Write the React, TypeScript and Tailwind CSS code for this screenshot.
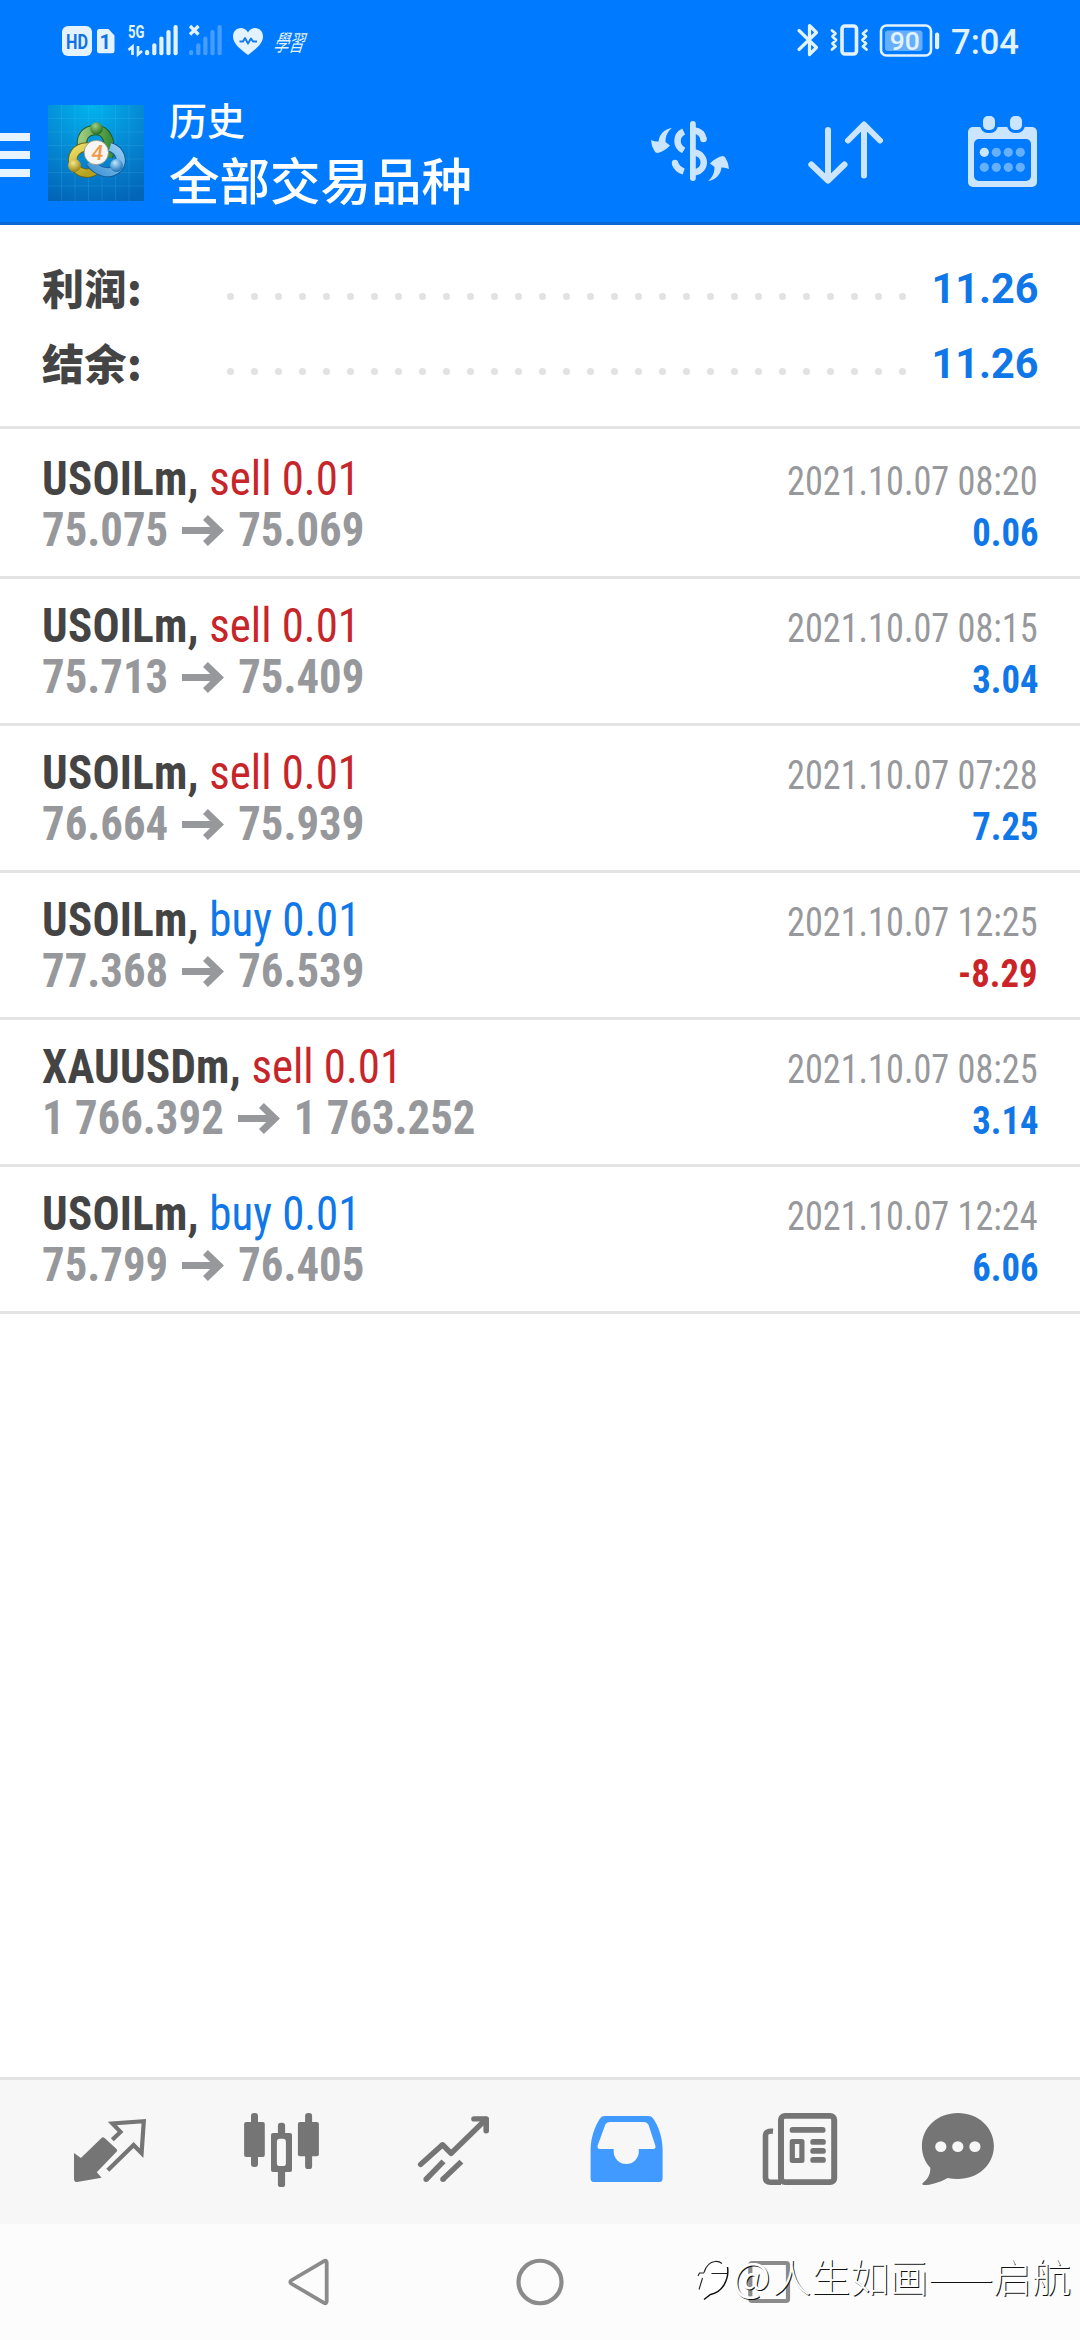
import type { ReactNode } from "react";

const CJK = "font-['Noto_Sans_CJK_SC',sans-serif]";
const ROBOTO = "font-[Roboto,sans-serif]";
const CONDENSED = "font-['Roboto_Condensed',Roboto,sans-serif] [font-stretch:75%]";

type Slice = { x: number; y: number; w: number; h: number; outH?: number; className?: string; children: ReactNode };

/* An icon drawn in screen coordinates: the view box is the icon's own area. */
function Icon({ x, y, w, h, outH, className = "", children }: Slice) {
  return (
    <svg
      width={w}
      height={outH ?? h}
      viewBox={`${x} ${y} ${w} ${h}`}
      preserveAspectRatio="none"
      fill="none"
      className={`block shrink-0 overflow-visible ${className}`}
    >
      {children}
    </svg>
  );
}

function SignalBars({ x }: { x: number }) {
  return (
    <g fill="currentColor">
      <rect x={x} y="50" width="4.2" height="5.2" rx="2" />
      <rect x={x + 7.2} y="43.3" width="4.2" height="12" rx="2" />
      <rect x={x + 14.3} y="36.6" width="4.2" height="18.6" rx="2" />
      <rect x={x + 21.4} y="30" width="4.2" height="25.2" rx="2" />
      <rect x={x + 28.5} y="25" width="4.2" height="30.2" rx="2" />
    </g>
  );
}

function StatusBar() {
  return (
    <div className="flex h-20 items-start justify-between pr-[50px] pl-[60px] text-[#e3f2ff]">
      <div className="flex">
        <Icon x={60} y={0} w={34} h={80}>
          <rect x="62" y="26" width="30" height="30" rx="6" fill="currentColor" />
          <text x="77" y="48.800" textAnchor="middle" fontSize="19.5" fontWeight="700" textLength="22" lengthAdjust="spacingAndGlyphs" fill="#1273e0" className="font-[Roboto,sans-serif]">
            HD
          </text>
        </Icon>
        <Icon x={94} y={0} w={32} h={80}>
          <path d="M99 29h9.5l6 6.5V51a2.2 2.2 0 0 1-2.2 2.2H99A2.2 2.2 0 0 1 97 51V31.200A2.200 2.200 0 0 1 99 29Z" fill="currentColor" />
          <text x="105.300" y="49" textAnchor="middle" fontSize="20" fontWeight="700" fill="#1273e0" className="font-[Roboto,sans-serif]">
            1
          </text>
        </Icon>
        <Icon x={126} y={0} w={60} h={80}>
          <text x="128" y="38" fontSize="18" fontWeight="700" textLength="16.500" lengthAdjust="spacingAndGlyphs" fill="currentColor" className="font-[Roboto,sans-serif]">
            5G
          </text>
          <path d="M128.500 50l4-3.500V55M138 46v8.500l4-3.500" stroke="currentColor" strokeWidth="2.600" />
          <SignalBars x={145} />
        </Icon>
        <Icon x={186} y={0} w={44} h={80}>
          <path d="M190 26l8.500 8.500M198.500 26l-8.500 8.500" stroke="currentColor" strokeWidth="3.200" />
          <g opacity="0.3">
            <SignalBars x={189} />
          </g>
        </Icon>
        <Icon x={230} y={0} w={40} h={80}>
          <path d="M248 55C240 49 233 43.500 233 36.500C233 31.500 236.500 28 240.800 28C243.800 28 246.600 29.700 248 32.500C249.400 29.700 252.200 28 255.200 28C259.500 28 263 31.500 263 36.500C263 43.500 256 49 248 55Z" fill="currentColor" />
          <path d="M239.500 41.500h3.500l2-3.500 3 5.500 3-5 2 3h4" stroke="#1a7cea" strokeWidth="2" strokeLinejoin="round" />
        </Icon>
        <Icon x={270} y={0} w={44} h={80}>
          <g transform="translate(273 50.500) skewX(-18) scale(.72 1.080)">
            <text fontSize="21" fontWeight="400" fill="currentColor" className="font-['Noto_Sans_CJK_TC',sans-serif]">
              學習
            </text>
          </g>
        </Icon>
      </div>
      <div className="flex">
        <Icon x={795} y={0} w={30} h={80}>
          <path d="M799 30.500L816.500 47.500L809.500 54.500V25.500L816.500 32.500L799 49.500" stroke="currentColor" strokeWidth="3.200" strokeLinejoin="round" strokeLinecap="round" />
        </Icon>
        <Icon x={825} y={0} w={50} h={80}>
          <rect x="842" y="26" width="14.500" height="28" rx="3" stroke="currentColor" strokeWidth="3.600" />
          <path d="M832 30.500l3.500 3-3 3 3.500 3.500-3.500 3.500 3 3-3.500 3M866.500 30.500l-3.500 3 3 3-3.500 3.500 3.500 3.500-3 3 3.500 3" stroke="currentColor" strokeWidth="2.800" strokeLinejoin="round" strokeLinecap="round" />
        </Icon>
        <Icon x={875} y={0} w={75} h={80}>
          <rect x="881" y="25.500" width="50" height="30" rx="5.500" stroke="currentColor" strokeWidth="2.600" />
          <rect x="885" y="30.500" width="37.500" height="20.500" rx="3" fill="#66afff" />
          <text x="904.800" y="50" textAnchor="middle" fontSize="26.500" fontWeight="500" fill="currentColor" className="font-[Roboto,sans-serif]">
            90
          </text>
          <rect x="935" y="32.500" width="4.200" height="16.800" rx="2" fill="currentColor" />
        </Icon>
        <Icon x={950} y={0} w={80} h={80}>
          <text x="951" y="54.300" fontSize="35.500" fontWeight="500" textLength="68" lengthAdjust="spacingAndGlyphs" fill="currentColor" className="font-[Roboto,sans-serif]">
            7:04
          </text>
        </Icon>
      </div>
    </div>
  );
}

function AppLogo() {
  return (
    <Icon x={0} y={0} w={96} h={96}>
      <defs>
        <radialGradient id="logoBg" cx="0.45" cy="0" r="1.05">
          <stop offset="0" stopColor="#00b4ee" />
          <stop offset="0.5" stopColor="#058ad4" />
          <stop offset="1" stopColor="#0365b8" />
        </radialGradient>
        <radialGradient id="ballG" cx="0.4" cy="0.3" r="0.7">
          <stop offset="0" stopColor="#a3cf86" />
          <stop offset="1" stopColor="#226e22" />
        </radialGradient>
        <radialGradient id="ballY" cx="0.4" cy="0.3" r="0.7">
          <stop offset="0" stopColor="#f5e98a" />
          <stop offset="1" stopColor="#9c8210" />
        </radialGradient>
        <radialGradient id="ballB" cx="0.4" cy="0.3" r="0.7">
          <stop offset="0" stopColor="#bfe6ff" />
          <stop offset="1" stopColor="#1c70b8" />
        </radialGradient>
        <linearGradient id="lobeG" x1="0" y1="0" x2="1" y2="0">
          <stop offset="0" stopColor="#9cc97c" />
          <stop offset="1" stopColor="#3f8f3a" />
        </linearGradient>
        <linearGradient id="lobeY" x1="0" y1="0" x2="0.6" y2="1">
          <stop offset="0" stopColor="#ece06a" />
          <stop offset="1" stopColor="#b5a11c" />
        </linearGradient>
        <linearGradient id="lobeB" x1="0" y1="1" x2="1" y2="0">
          <stop offset="0" stopColor="#3f93d4" />
          <stop offset="1" stopColor="#93cdf2" />
        </linearGradient>
      </defs>
      <rect width="96" height="96" fill="url(#logoBg)" />
      <path d="M13.500 0v96M27 0v96M40.500 0v96M54 0v96M67.500 0v96M81 0v96M0 13.500h96M0 27h96M0 40.500h96M0 54h96M0 67.500h96M0 81h96" stroke="#5cc4f2" strokeOpacity="0.22" strokeWidth="0.800" />
      <path d="M35 46C31 32 38 25 48 25C58 25 64 36 60 52" stroke="#1f5a24" strokeWidth="10.500" />
      <path d="M35 46C31 32 38 25 48 25C58 25 64 36 60 52" stroke="url(#lobeG)" strokeWidth="8.500" />
      <path d="M41 42C28 41 21 52 27 62C33 70 44 70 50 63" stroke="#6b6414" strokeWidth="9.500" />
      <path d="M41 42C28 41 21 52 27 62C33 70 44 70 50 63" stroke="url(#lobeY)" strokeWidth="7.500" />
      <path d="M62 42C72 45 76 56 70 63C62 71 49 67 42 57" stroke="#175a98" strokeWidth="10" />
      <path d="M62 42C72 45 76 56 70 63C62 71 49 67 42 57" stroke="url(#lobeB)" strokeWidth="8" />
      <circle cx="48.500" cy="23.500" r="6.300" fill="url(#ballG)" />
      <circle cx="26.500" cy="60.500" r="6.500" fill="url(#ballY)" />
      <circle cx="68.500" cy="60.500" r="6.500" fill="url(#ballB)" />
      <circle cx="48.300" cy="47.500" r="12.200" fill="#f6f6f4" stroke="#8a8f70" strokeWidth="0.800" />
      <g transform="translate(48.500 55) skewX(-8)">
        <text textAnchor="middle" fontSize="21" fontWeight="500" fill="#f09a4a" className="font-[Roboto,sans-serif]">
          4
        </text>
      </g>
    </Icon>
  );
}

function Header() {
  return (
    <header className="h-[225px] border-b-[3px] border-[#0968d2] bg-[#007aff]">
      <StatusBar />
      <div className="flex items-start">
        <div className="mt-[53px] flex w-[30px] flex-col gap-2.5">
          <span className="h-2 bg-[#e6f4ff]" />
          <span className="h-2 bg-[#e6f4ff]" />
          <span className="h-2 bg-[#e6f4ff]" />
        </div>
        <div className="mt-[25px] ml-[18px]">
          <AppLogo />
        </div>
        <div className={`ml-[25px] w-[471px] ${CJK} font-medium text-white`}>
          <div className="mt-[13px] h-[52px] text-[38px] leading-[52px]">历史</div>
          <div className="h-[66px] text-[50.5px] leading-[66px]">全部交易品种</div>
        </div>
        <div className="mt-[30px] flex text-[#cce5ff]">
          <Icon x={640} y={110} w={140} h={84}>
            <g stroke="currentColor" strokeWidth="6.500">
              <path d="M692.900 124v54" strokeWidth="5.800" strokeLinecap="round" />
              <path d="M683.700 131.500Q677.500 134.500 677.500 141Q677.500 147 683.700 150.500" />
              <path d="M694 130.500C699 131 702.500 133.500 703.500 139" />
              <circle cx="703.500" cy="139" r="3.300" fill="currentColor" stroke="none" />
              <path d="M694 152.500C707 154 707 171 694 172.500" />
              <path d="M675 163.500C676.500 167.500 679 170 683.700 171.500" />
              <circle cx="675" cy="163" r="3.200" fill="currentColor" stroke="none" />
            </g>
            <path id="swoosh" d="M672 128C667.500 131.500 665.500 136 665.500 142L670 145.500Q664.500 151.500 657.500 153Q655.500 153 654.500 151Q651.200 146 651 140Q655 142 658.500 141.500C659.500 134 664.500 129 672 128Z" fill="currentColor" />
            <use href="#swoosh" transform="rotate(180 690 154.500)" />
          </Icon>
          <Icon x={780} y={110} w={160} h={84}>
            <path d="M828 130v50M811.300 164.500l16.700 16 16.500-16M864 175.500v-50M848 140.500l16-16 16 16" stroke="currentColor" strokeWidth="6" strokeLinecap="round" strokeLinejoin="round" />
          </Icon>
          <Icon x={940} y={110} w={120} h={84}>
            <rect x="968" y="127" width="69" height="60" rx="5" fill="currentColor" />
            <rect x="974" y="139" width="57" height="42" rx="5" fill="#007aff" />
            <g fill="currentColor" stroke="#007aff" strokeWidth="6" paintOrder="stroke">
              <rect x="983" y="116" width="12" height="14" rx="5" />
              <rect x="1010" y="116" width="12" height="14" rx="5" />
            </g>
            {[152.300, 167.300].map((cy, row) =>
              [984.300, 996.300, 1008.300, 1020.300].map((cx, col) => (
                <circle key={`${row}-${col}`} cx={cx} cy={cy} r="4.600" fill={row + col === 0 ? "#cce5ff" : "#66b0ff"} />
              )),
            )}
          </Icon>
        </div>
      </div>
    </header>
  );
}

function SummaryRow({ label, value }: { label: string; value: string }) {
  return (
    <div className="flex h-[75px] items-center pr-[42px] pl-[42px]">
      <div className={`-mt-1 w-[184.500px] ${CJK} text-[42px] leading-[71px] font-black tracking-[0.5px] text-[#444444]`}>{label}</div>
      <div className="mt-4 flex gap-[17px]">
        {Array.from({ length: 29 }, (_, i) => (
          <span key={i} className="size-[7px] rounded-full bg-[#e2e2e2]" />
        ))}
      </div>
      <div className={`flex-1 origin-right scale-x-[0.985] text-right ${ROBOTO} text-[42px] leading-[75px] font-bold text-[#0f77e8]`}>{value}</div>
    </div>
  );
}

type Deal = { symbol: string; side: "buy" | "sell"; open: string; close: string; time: string; profit: string };

const deals: Deal[] = [
  { symbol: "USOILm", side: "sell", open: "75.075", close: "75.069", time: "2021.10.07 08:20", profit: "0.06" },
  { symbol: "USOILm", side: "sell", open: "75.713", close: "75.409", time: "2021.10.07 08:15", profit: "3.04" },
  { symbol: "USOILm", side: "sell", open: "76.664", close: "75.939", time: "2021.10.07 07:28", profit: "7.25" },
  { symbol: "USOILm", side: "buy", open: "77.368", close: "76.539", time: "2021.10.07 12:25", profit: "-8.29" },
  { symbol: "XAUUSDm", side: "sell", open: "1 766.392", close: "1 763.252", time: "2021.10.07 08:25", profit: "3.14" },
  { symbol: "USOILm", side: "buy", open: "75.799", close: "76.405", time: "2021.10.07 12:24", profit: "6.06" },
];

function DealRow({ deal }: { deal: Deal }) {
  const loss = deal.profit.startsWith("-");
  return (
    <div className={`h-[147px] border-b-[3px] border-[#e4e4e4] px-[42px] pt-[21px] ${CONDENSED} text-[48px] leading-[51px]`}>
      <div className="flex h-[51px] items-baseline justify-between">
        <div className="origin-left scale-x-[0.937] font-bold tracking-[0.25px] text-[#444444]">
          {deal.symbol},{" "}
          <span className={`font-normal tracking-[-0.05px] ${deal.side === "buy" ? "text-[#0f77e8]" : "text-[#c6262a]"}`}>
            {deal.side} 0.01
          </span>
        </div>
        <div className="origin-right scale-x-[0.906] text-[40px] text-[#97989b]">{deal.time}</div>
      </div>
      <div className="flex h-[51px] items-baseline justify-between">
        <div className="flex origin-left scale-x-[0.933] items-baseline font-bold text-[#97989b]">
          {deal.open}
          <svg width="45" height="32" viewBox="0 0 42 32" preserveAspectRatio="none" fill="none" className="mx-[15px]">
            <path d="M0 16.500h37M23.500 3.500l13.500 13-13.500 13" stroke="currentColor" strokeWidth="7" />
          </svg>
          {deal.close}
        </div>
        <div className={`origin-right scale-x-[0.94] text-[39px] font-bold ${loss ? "text-[#cb2428]" : "text-[#0f77e8]"}`}>{deal.profit}</div>
      </div>
    </div>
  );
}

const TAB = { y: 2080.3, w: 172, h: 148.8, outH: 144 };

function TabBar() {
  return (
    <nav className="flex h-[147px] border-t-[3px] border-[#e4e4e4] bg-[#f7f7f7] px-6 text-[#757575]">
      <Icon x={24} {...TAB}>
        <path d="M74 2155.700L80.900 2160.900L101.500 2140.200Q103 2138.700 104.600 2140.200L116.500 2151.500Q118 2153 116.500 2154.500L96.800 2175.700L101.600 2181.200L77 2185.700Q74 2185.700 74 2182.500Z" fill="currentColor" />
        <path d="M112.300 2142L120.500 2134L112.300 2125.200L143.800 2122.900L141.600 2156L133.600 2147.500L107.800 2173.500" stroke="currentColor" strokeWidth="4.200" />
      </Icon>
      <Icon x={196} {...TAB}>
        <g fill="currentColor">
          <rect x="251" y="2114.400" width="7" height="55.800" rx="3" />
          <rect x="244.100" y="2123.700" width="20.700" height="36.200" rx="2" />
          <rect x="277.900" y="2124.400" width="7.200" height="66.500" rx="3" />
          <rect x="271" y="2135" width="21" height="40.400" rx="2" />
          <rect x="305.100" y="2114.400" width="7" height="57.900" rx="3" />
          <rect x="297.900" y="2123.700" width="21" height="35.300" rx="2" />
        </g>
        <rect x="276.900" y="2141" width="9" height="28.200" rx="3" fill="#f7f7f7" />
      </Icon>
      <Icon x={368} {...TAB}>
        <g stroke="currentColor" strokeWidth="5.600" strokeLinejoin="round">
          <path d="M420.700 2167.500L442.500 2147.200L451.100 2156.100L485.900 2121" strokeLinecap="round" />
          <path d="M474 2120.500H486.200V2132.800" strokeLinecap="round" />
          <path d="M426.500 2182.500L443.500 2164.400M443.300 2182.500L461.400 2164.700" />
          <path d="M426.200 2182.800h0M443 2182.800h0" strokeLinecap="round" />
        </g>
      </Icon>
      <Icon x={540} {...TAB} className="text-[#419aff]">
        <path fillRule="evenodd" d="M590.600 2151C591 2139 595 2128 600 2120Q601.500 2117.500 605 2117.500H648Q651.500 2117.500 653.200 2120C658.500 2128 662.300 2139 662.600 2151V2181.700Q662.600 2185.700 658.600 2185.700H594.600Q590.600 2185.700 590.600 2181.700ZM609.500 2123.700Q606.500 2123.700 605.200 2126.500L597.700 2148Q596.800 2151.600 600 2151.600H613.700V2154.500A12.550 12.550 0 0 0 638.800 2154.500V2151.600H653Q656.400 2151.600 655.300 2148L648.500 2126.500Q647.200 2123.700 644 2123.700Z" fill="currentColor" />
      </Icon>
      <Icon x={712} {...TAB}>
        <g stroke="currentColor">
          <rect x="781" y="2117.400" width="53.200" height="68.400" rx="4" strokeWidth="6" />
          <path d="M773 2133.200Q765.500 2132.500 765.500 2138V2181Q765.500 2186 770.500 2186H781" strokeWidth="5.600" />
          <rect x="792.300" y="2143.900" width="9.600" height="19.500" strokeWidth="5.200" strokeLinejoin="round" />
        </g>
        <g fill="currentColor">
          <rect x="789.700" y="2128.900" width="35.800" height="6" rx="2.800" />
          <rect x="810.300" y="2141.300" width="15.500" height="6" rx="2.800" />
          <rect x="810.300" y="2150.600" width="15.500" height="6" rx="2.800" />
          <rect x="810.300" y="2159.900" width="15.500" height="6" rx="2.800" />
        </g>
      </Icon>
      <Icon x={884} {...TAB}>
        <path d="M957.900 2114.400C978 2114.400 993.900 2129 993.900 2148.500C993.900 2168 978 2182.600 957.900 2182.600Q952.500 2182.600 947.500 2181.500C939 2186.500 931 2188.800 923.500 2188.800Q921 2188 923.500 2186C928.500 2182 930.500 2177 930.300 2171C925 2165 921.900 2157.500 921.900 2148.500C921.900 2129 938 2114.400 957.900 2114.400Z" fill="currentColor" />
        <g fill="#f7f7f7">
          <circle cx="940.800" cy="2149.200" r="5.600" />
          <circle cx="957.800" cy="2149.200" r="5.600" />
          <circle cx="974.900" cy="2149.200" r="5.600" />
        </g>
      </Icon>
    </nav>
  );
}

const NAV = { y: 2229.1, w: 230, h: 119.8, outH: 116 };

function SystemNav() {
  return (
    <div className="relative flex h-[116px] justify-center bg-[#fcfcfc] text-[#8b8b8b]">
      <Icon x={195} {...NAV}>
        <path d="M291.500 2287.200L324 2267.500Q326.700 2266 326.700 2269V2309Q326.700 2312 324 2310.500L291.500 2290.800Q289 2289 291.500 2287.200Z" stroke="currentColor" strokeWidth="3.800" />
      </Icon>
      <Icon x={425} {...NAV}>
        <ellipse cx="540" cy="2289" rx="21.500" ry="21.900" stroke="currentColor" strokeWidth="4.200" />
      </Icon>
      <Icon x={655} {...NAV}>
        <rect x="750.300" y="2269.300" width="37.700" height="39.300" rx="2" stroke="currentColor" strokeWidth="4.200" />
      </Icon>
      <div className="absolute top-[24px] right-[9px] flex items-center">
        <svg width="35" height="44" viewBox="694 2260 35 44" fill="none" className="mt-2">
          <path d="M696 2277H701Q704 2264 714 2263Q727 2264 727 2278Q726 2293 711 2298L702 2303L704 2296L697 2292Z" fill="#fff" />
          <path d="M697 2279l1.500-3h4.500M703 2275.500Q706 2265.500 714 2264.500Q718 2264 721 2266.500M710.500 2276.500h16M701.500 2281l-3.500 11.500" stroke="#222" strokeWidth="1.100" />
          <path d="M726.500 2270Q728 2279 723 2288Q718 2296 709.500 2297.500L703 2302.500" stroke="#111" strokeWidth="1.500" />
        </svg>
        <span className={`${CJK} ml-0.5 flex items-baseline text-[39px] leading-[54px] whitespace-nowrap text-white [text-shadow:1px_1px_0_#111]`}>
          <span className="mr-[2px] text-[40px]">@</span>
          <span className="font-light">人生如画——启航</span>
        </span>
      </div>
    </div>
  );
}

export default function App() {
  return (
    <div className="flex h-[2340px] w-[1080px] flex-col overflow-hidden bg-white">
      <Header />
      <section className="h-[204px] border-b-[3px] border-[#e4e4e4] pt-[26px]">
        <SummaryRow label="利润:" value="11.26" />
        <SummaryRow label="结余:" value="11.26" />
      </section>
      <main className="flex-1 pt-[3px]">
        {deals.map((deal, i) => (
          <DealRow key={i} deal={deal} />
        ))}
      </main>
      <TabBar />
      <SystemNav />
    </div>
  );
}
